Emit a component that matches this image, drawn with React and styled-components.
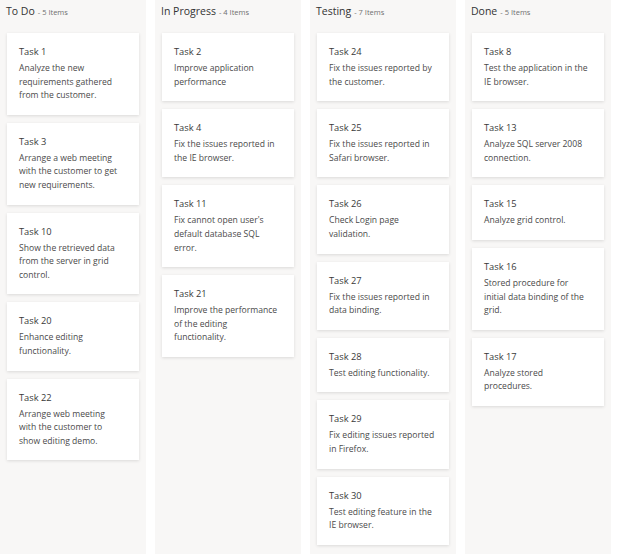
import React from 'react';
import styled, { createGlobalStyle } from 'styled-components';

const GlobalStyle = createGlobalStyle`
  body {
    margin: 0;
    background: #ffffff;
    font-family: "Open Sans", "Noto Sans", sans-serif;
    color: #333333;
  }
`;

const Board = styled.div`
  display: flex;
  align-items: stretch;
  gap: 9px;
  width: 611px;
`;

const Column = styled.div`
  width: 146px;
  flex: none;
  background: #f8f7f6;
  padding: 0 7px 9px 7px;
  box-sizing: border-box;
  display: flex;
  flex-direction: column;
`;

const Header = styled.div`
  height: 33px;
  display: flex;
  align-items: baseline;
  padding-top: 4px;
  margin-left: -1px;
  box-sizing: border-box;
  white-space: nowrap;
`;

const HeaderTitle = styled.span`
  font-size: 10.5px;
  color: #333333;
`;

const HeaderCount = styled.span`
  font-size: 7.5px;
  color: #707070;
  margin-left: 3px;
`;

const CardList = styled.div`
  display: flex;
  flex-direction: column;
  gap: 8px;
`;

const Card = styled.div`
  background: #ffffff;
  box-shadow: 0 1px 3px rgba(0, 0, 0, 0.12);
  padding: 12px 8px 12px 12px;
  box-sizing: border-box;
`;

const CardTitle = styled.div`
  font-size: 9.3px;
  line-height: 14px;
  color: #3a3a3a;
  margin-bottom: 3px;
`;

const CardText = styled.div`
  font-size: 8.6px;
  line-height: 13.6px;
  color: #4a4a4a;
  white-space: pre-line;
`;

const columns = [
  {
    title: 'To Do',
    cards: [
      ['Task 1', 'Analyze the new\nrequirements gathered\nfrom the customer.'],
      ['Task 3', 'Arrange a web meeting\nwith the customer to get\nnew requirements.'],
      ['Task 10', 'Show the retrieved data\nfrom the server in grid\ncontrol.'],
      ['Task 20', 'Enhance editing\nfunctionality.'],
      ['Task 22', 'Arrange web meeting\nwith the customer to\nshow editing demo.'],
    ],
  },
  {
    title: 'In Progress',
    cards: [
      ['Task 2', 'Improve application\nperformance'],
      ['Task 4', 'Fix the issues reported in\nthe IE browser.'],
      ['Task 11', "Fix cannot open user's\ndefault database SQL\nerror."],
      ['Task 21', 'Improve the performance\nof the editing\nfunctionality.'],
    ],
  },
  {
    title: 'Testing',
    cards: [
      ['Task 24', 'Fix the issues reported by\nthe customer.'],
      ['Task 25', 'Fix the issues reported in\nSafari browser.'],
      ['Task 26', 'Check Login page\nvalidation.'],
      ['Task 27', 'Fix the issues reported in\ndata binding.'],
      ['Task 28', 'Test editing functionality.'],
      ['Task 29', 'Fix editing issues reported\nin Firefox.'],
      ['Task 30', 'Test editing feature in the\nIE browser.'],
    ],
  },
  {
    title: 'Done',
    cards: [
      ['Task 8', 'Test the application in the\nIE browser.'],
      ['Task 13', 'Analyze SQL server 2008\nconnection.'],
      ['Task 15', 'Analyze grid control.'],
      ['Task 16', 'Stored procedure for\ninitial data binding of the\ngrid.'],
      ['Task 17', 'Analyze stored\nprocedures.'],
    ],
  },
];

export default function App() {
  return (
    <>
      <GlobalStyle />
      <Board>
        {columns.map(col => (
          <Column key={col.title}>
            <Header>
              <HeaderTitle>{col.title}</HeaderTitle>
              <HeaderCount>- {col.cards.length} Items</HeaderCount>
            </Header>
            <CardList>
              {col.cards.map(([title, text]) => (
                <Card key={title}>
                  <CardTitle>{title}</CardTitle>
                  <CardText>{text}</CardText>
                </Card>
              ))}
            </CardList>
          </Column>
        ))}
      </Board>
    </>
  );
}
